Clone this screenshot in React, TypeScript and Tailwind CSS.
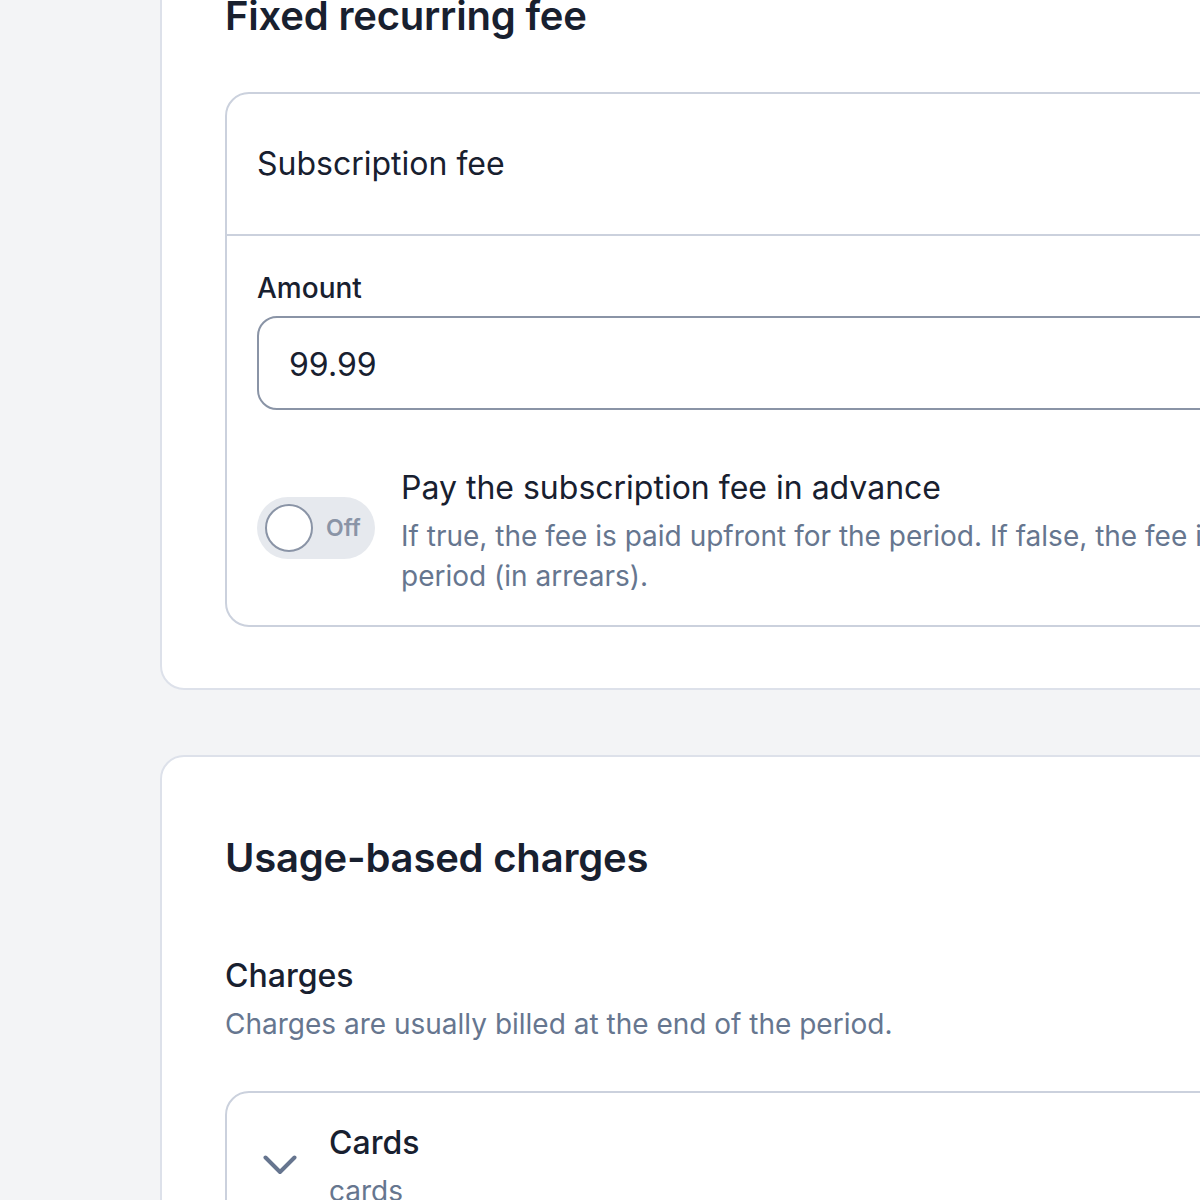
import React, { useState } from 'react';

const ChevronDown: React.FC = () => (
  <svg width="34" height="20" viewBox="0 0 34 20" fill="none" className="shrink-0">
    <polyline
      points="2.5,2.5 17,17 31.5,2.5"
      stroke="#66758f"
      strokeWidth="4"
      strokeLinecap="round"
      strokeLinejoin="round"
    />
  </svg>
);

const Toggle: React.FC<{ on: boolean; onChange: (v: boolean) => void }> = ({ on, onChange }) => (
  <button
    type="button"
    onClick={() => onChange(!on)}
    className="mt-[31px] flex h-[62px] w-[118px] shrink-0 items-center gap-[13px] rounded-full bg-[#e6e9ee] pl-[8px]"
  >
    <span className="h-[48px] w-[48px] rounded-full border-2 border-[#8a94a6] bg-white" />
    <span className="text-[23px] font-semibold text-[#8a94a6]">{on ? 'On' : 'Off'}</span>
  </button>
);

const App: React.FC = () => {
  const [amount, setAmount] = useState<string>('99.99');
  const [inAdvance, setInAdvance] = useState<boolean>(false);

  return (
    <div className="h-[1200px] w-full overflow-hidden bg-[#f3f4f6] pl-[160px] font-['Inter',sans-serif] text-[#18202f]">
      {/* fixed fee card */}
      <section className="-mt-[80px] w-[1480px] rounded-[24px] border-2 border-[#dde1ea] bg-white px-[63px] pt-[70px] pb-[61px]">
        <h2 className="text-[40px] leading-[48px] font-semibold tracking-[-0.2px]">Fixed recurring fee</h2>

        <div className="mt-[52px] rounded-[24px] border-2 border-[#cbd1dd]">
          <div className="flex h-[142px] items-center border-b-2 border-[#cbd1dd] px-[30px]">
            <h3 className="text-[32px] leading-[40px]">Subscription fee</h3>
          </div>

          <div className="px-[30px] pt-[32px] pb-[29px]">
            <label className="block text-[28px] leading-[40px] font-medium">Amount</label>
            <input
              value={amount}
              onChange={(e) => setAmount(e.target.value)}
              className="mt-[8px] block h-[94px] w-full rounded-[20px] border-2 border-[#8a94a6] px-[30px] pt-[3px] text-[32px] text-[#18202f] outline-none"
            />

            <div className="mt-[56px] flex items-start gap-[26px]">
              <Toggle on={inAdvance} onChange={setInAdvance} />
              <div>
                <p className="text-[32px] leading-[44px]">Pay the subscription fee in advance</p>
                <p className="mt-[6px] text-[28px] leading-[40px] text-[#66768f]">
                  If true, the fee is paid upfront for the period. If false, the fee is paid at the end of the
                  period (in arrears).
                </p>
              </div>
            </div>
          </div>
        </div>
      </section>

      {/* usage charges card */}
      <section className="mt-[65px] w-[1480px] rounded-[24px] border-2 border-[#dde1ea] bg-white px-[63px] pt-[77px]">
        <h2 className="text-[40px] leading-[48px] font-semibold tracking-[-0.2px]">Usage-based charges</h2>

        <div className="mt-[74px]">
          <h3 className="text-[32px] leading-[40px] font-medium">Charges</h3>
          <p className="mt-[8px] text-[28px] leading-[40px] text-[#66768f]">
            Charges are usually billed at the end of the period.
          </p>
        </div>

        <div className="mt-[47px] rounded-[24px] border-2 border-[#cbd1dd]">
          <div className="flex items-start gap-[32px] px-[36px] pt-[28px] pb-[24px]">
            <div className="pt-[34px]">
              <ChevronDown />
            </div>
            <div>
              <p className="text-[32px] leading-[44px] font-medium">Cards</p>
              <p className="mt-[6px] text-[28px] leading-[40px] text-[#66768f]">cards</p>
            </div>
          </div>
        </div>
      </section>
    </div>
  );
};

export default App;
